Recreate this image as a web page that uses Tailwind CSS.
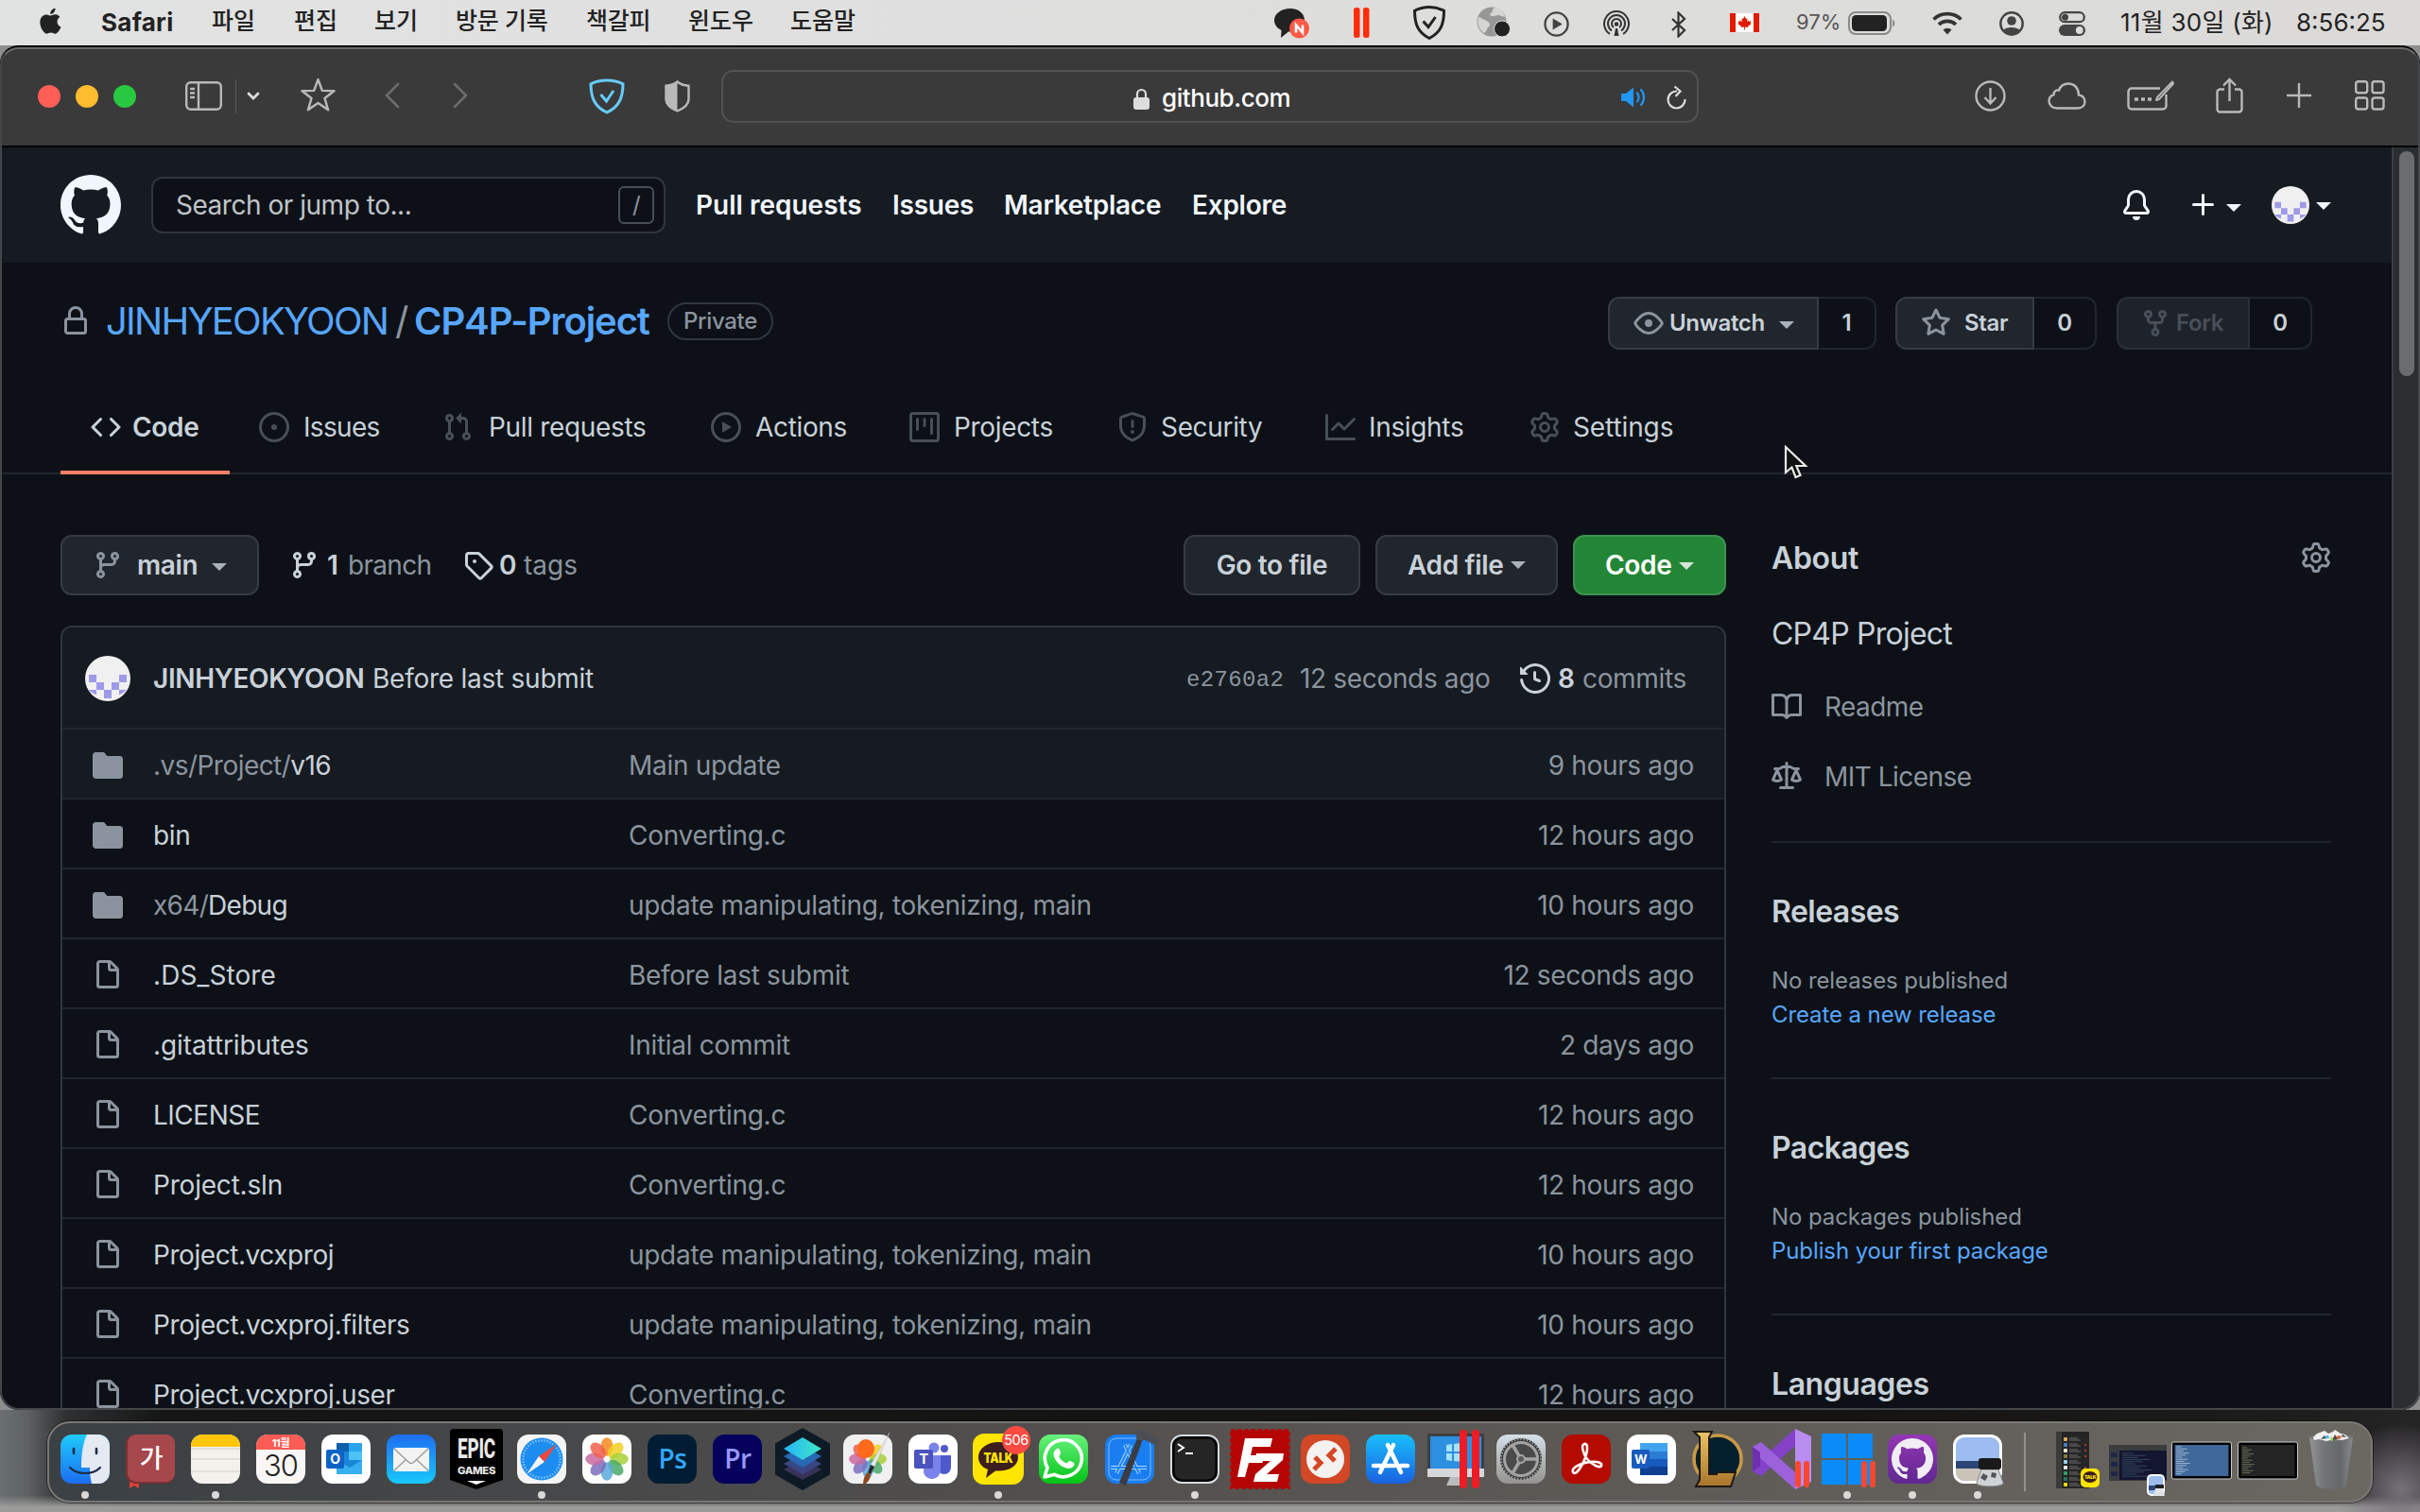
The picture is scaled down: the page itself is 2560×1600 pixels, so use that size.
<!DOCTYPE html>
<html lang="ko">
<head>
<meta charset="utf-8">
<title>JINHYEOKYOON/CP4P-Project</title>
<script src="https://cdn.jsdelivr.net/npm/@tailwindcss/browser@4"></script>
</head>
<body class="w-[2560px] h-[1600px] overflow-hidden bg-[#8d8d8d] font-['Inter','Noto_Sans_CJK_KR',sans-serif] tracking-[-0.336px] whitespace-nowrap">

<svg class="absolute size-0">
  <symbol id="i-mark" viewBox="0 0 16 16"><path fill-rule="evenodd" d="M8 0C3.58 0 0 3.58 0 8c0 3.54 2.29 6.53 5.47 7.59.4.07.55-.17.55-.38 0-.19-.01-.82-.01-1.49-2.01.37-2.53-.49-2.69-.94-.09-.23-.48-.94-.82-1.13-.28-.15-.68-.52-.01-.53.63-.01 1.08.58 1.23.82.72 1.21 1.87.87 2.33.66.07-.52.28-.87.51-1.07-1.78-.2-3.64-.89-3.64-3.95 0-.87.31-1.59.82-2.15-.08-.2-.36-1.02.08-2.12 0 0 .67-.21 2.2.82.64-.18 1.32-.27 2-.27.68 0 1.36.09 2 .27 1.53-1.04 2.2-.82 2.2-.82.44 1.1.16 1.92.08 2.12.51.56.82 1.27.82 2.15 0 3.07-1.87 3.75-3.65 3.95.29.25.54.73.54 1.48 0 1.07-.01 1.93-.01 2.2 0 .21.15.46.55.38A8.013 8.013 0 0016 8c0-4.42-3.58-8-8-8z"/></symbol>
  <symbol id="i-lock" viewBox="0 0 16 16"><path fill-rule="evenodd" d="M4 4v2h-.25A1.75 1.75 0 002 7.750v5.5c0 .966.784 1.750 1.750 1.750h8.500A1.750 1.750 0 0014 13.250v-5.500A1.750 1.750 0 0012.250 6H12V4a4 4 0 10-8 0zm6.500 2V4a2.500 2.500 0 00-5 0v2h5zM12 7.500h.250a.250.250 0 01.250.250v5.500a.250.250 0 01-.250.250h-8.500a.250.250 0 01-.250-.250v-5.500a.250.250 0 01.250-.250H12z"/></symbol>
  <symbol id="i-code" viewBox="0 0 16 16"><path fill-rule="evenodd" d="M4.72 3.22a.75.75 0 011.06 1.06L2.06 8l3.72 3.72a.75.75 0 11-1.06 1.06L.47 8.53a.75.75 0 010-1.06l4.250-4.250zm6.560 0a.75.75 0 10-1.060 1.060L13.940 8l-3.720 3.720a.75.75 0 101.060 1.060l4.250-4.250a.75.75 0 000-1.060l-4.250-4.250z"/></symbol>
  <symbol id="i-issue" viewBox="0 0 16 16"><path d="M8 9.500a1.500 1.500 0 100-3 1.500 1.500 0 000 3z"/><path fill-rule="evenodd" d="M8 0a8 8 0 100 16A8 8 0 008 0zM1.500 8a6.500 6.500 0 1113 0 6.500 6.500 0 01-13 0z"/></symbol>
  <symbol id="i-pr" viewBox="0 0 16 16"><path fill-rule="evenodd" d="M7.177 3.073L9.573.677A.25.25 0 0110 .854v4.792a.25.25 0 01-.427.177L7.177 3.427a.25.25 0 010-.354zM3.75 2.5a.75.75 0 100 1.5.75.75 0 000-1.5zm-2.250.75a2.250 2.250 0 113 2.122v5.256a2.251 2.251 0 11-1.500 0V5.372A2.250 2.250 0 011.500 3.250zM11 2.500h-1V4h1a1 1 0 011 1v5.628a2.251 2.251 0 101.500 0V5A2.500 2.500 0 0011 2.500zm1 10.250a.75.75 0 111.500 0 .75.75 0 01-1.500 0zM3.750 12a.75.75 0 100 1.500.75.75 0 000-1.500z"/></symbol>
  <symbol id="i-play" viewBox="0 0 16 16"><path fill-rule="evenodd" d="M1.500 8a6.500 6.500 0 1113 0 6.500 6.500 0 01-13 0zM8 0a8 8 0 100 16A8 8 0 008 0zM6.379 5.227A.25.25 0 006 5.442v5.117a.25.25 0 00.379.214l4.264-2.559a.25.25 0 000-.428L6.379 5.227z"/></symbol>
  <symbol id="i-project" viewBox="0 0 16 16"><path fill-rule="evenodd" d="M1.75 0A1.75 1.75 0 000 1.75v12.5C0 15.216.784 16 1.75 16h12.5A1.75 1.75 0 0016 14.25V1.75A1.75 1.75 0 0014.25 0H1.75zM1.5 1.75a.25.25 0 01.25-.25h12.5a.25.25 0 01.25.25v12.5a.25.25 0 01-.25.25H1.75a.25.25 0 01-.25-.25V1.75zM11.75 3a.75.75 0 00-.75.75v7.5a.75.75 0 001.5 0v-7.5a.75.75 0 00-.75-.75zm-8.25.75a.75.75 0 011.5 0v5.5a.75.75 0 01-1.5 0v-5.5zM8 3a.75.75 0 00-.75.75v3.5a.75.75 0 001.5 0v-3.5A.75.75 0 008 3z"/></symbol>
  <symbol id="i-shield" viewBox="0 0 16 16"><path fill-rule="evenodd" d="M7.467.133a1.75 1.75 0 011.066 0l5.25 1.68A1.75 1.75 0 0115 3.48V7c0 1.566-.32 3.182-1.303 4.682-.983 1.498-2.585 2.813-5.032 3.855a1.7 1.7 0 01-1.33 0c-2.447-1.042-4.049-2.357-5.032-3.855C1.32 10.182 1 8.566 1 7V3.48a1.75 1.75 0 011.217-1.667l5.25-1.68zm.61 1.429a.25.25 0 00-.153 0l-5.25 1.68a.25.25 0 00-.174.238V7c0 1.358.275 2.666 1.057 3.86.784 1.194 2.121 2.34 4.366 3.297a.2.2 0 00.154 0c2.245-.956 3.582-2.104 4.366-3.298C13.225 9.666 13.5 8.36 13.5 7V3.48a.25.25 0 00-.174-.237l-5.25-1.68zM9 10.5a1 1 0 11-2 0 1 1 0 012 0zm-.25-5.75a.75.75 0 10-1.5 0v3a.75.75 0 001.5 0v-3z"/></symbol>
  <symbol id="i-graph" viewBox="0 0 16 16"><path fill-rule="evenodd" d="M1.500 1.750a.75.75 0 00-1.500 0v12.500c0 .414.336.75.75.75h14.500a.75.75 0 000-1.500H1.500V1.750zm14.280 2.530a.75.75 0 00-1.060-1.060L10 7.940 7.530 5.470a.75.75 0 00-1.060 0L3.220 8.720a.75.75 0 001.060 1.060L7 7.060l2.470 2.470a.75.75 0 001.060 0l5.250-5.250z"/></symbol>
  <symbol id="i-gear" viewBox="0 0 16 16"><path fill-rule="evenodd" d="M7.429 1.525a6.593 6.593 0 011.142 0c.036.003.108.036.137.146l.289 1.105c.147.56.55.967.997 1.189.174.086.341.183.501.29.417.278.97.423 1.53.27l1.102-.303c.11-.03.175.016.195.046.219.31.41.641.573.989.014.031.022.11-.059.19l-.815.806c-.411.406-.562.957-.53 1.456a4.588 4.588 0 010 .582c-.032.499.119 1.05.53 1.456l.815.806c.08.08.073.159.059.19a6.494 6.494 0 01-.573.99c-.02.029-.086.074-.195.045l-1.103-.303c-.559-.153-1.112-.008-1.529.27-.16.107-.327.204-.5.29-.449.222-.851.628-.998 1.189l-.289 1.105c-.029.11-.101.143-.137.146a6.613 6.613 0 01-1.142 0c-.036-.003-.108-.037-.137-.146l-.289-1.105c-.147-.56-.55-.967-.997-1.189a4.502 4.502 0 01-.501-.29c-.417-.278-.97-.423-1.53-.27l-1.102.303c-.11.03-.175-.016-.195-.046a6.492 6.492 0 01-.573-.989c-.014-.031-.022-.11.059-.19l.815-.806c.411-.406.562-.957.53-1.456a4.587 4.587 0 010-.582c.032-.499-.119-1.05-.53-1.456l-.815-.806c-.08-.08-.073-.159-.059-.19a6.44 6.44 0 01.573-.99c.02-.029.086-.075.195-.045l1.103.303c.559.153 1.112.008 1.529-.27.16-.107.327-.204.5-.29.449-.222.851-.628.998-1.189l.289-1.105c.029-.11.101-.143.137-.146zM8 0c-.236 0-.47.01-.701.03-.743.065-1.29.615-1.458 1.261l-.29 1.106c-.017.066-.078.158-.211.224a5.994 5.994 0 00-.668.386c-.123.082-.233.09-.3.071L3.27 2.776c-.644-.177-1.392.02-1.82.63a7.977 7.977 0 00-.704 1.217c-.315.675-.111 1.422.363 1.891l.815.806c.05.048.098.147.088.294a6.084 6.084 0 000 .772c.01.147-.038.246-.088.294l-.815.806c-.474.469-.678 1.216-.363 1.891.2.428.436.835.704 1.218.428.609 1.176.806 1.82.63l1.103-.303c.066-.019.176-.011.299.071.213.143.436.272.668.386.133.066.194.158.212.224l.289 1.106c.169.646.715 1.196 1.458 1.26a8.094 8.094 0 001.402 0c.743-.064 1.29-.614 1.458-1.26l.29-1.106c.017-.066.078-.158.211-.224a5.98 5.98 0 00.668-.386c.123-.082.233-.09.3-.071l1.102.302c.644.177 1.392-.02 1.82-.63.268-.382.505-.789.704-1.217.315-.675.111-1.422-.364-1.891l-.814-.806c-.05-.048-.098-.147-.088-.294a6.1 6.1 0 000-.772c-.01-.147.039-.246.088-.294l.814-.806c.475-.469.679-1.216.364-1.891a7.992 7.992 0 00-.704-1.218c-.428-.609-1.176-.806-1.82-.63l-1.103.303c-.066.019-.176.011-.299-.071a5.991 5.991 0 00-.668-.386c-.133-.066-.194-.158-.212-.224L10.16 1.29C9.99.645 9.444.095 8.701.031A8.094 8.094 0 008 0zm1.5 8a1.5 1.5 0 11-3 0 1.5 1.5 0 013 0zM11 8a3 3 0 11-6 0 3 3 0 016 0z"/></symbol>
  <symbol id="i-branch" viewBox="0 0 16 16"><path fill-rule="evenodd" d="M11.75 2.5a.75.75 0 100 1.5.75.75 0 000-1.5zm-2.25.75a2.25 2.25 0 113 2.122V6A2.5 2.5 0 0110 8.5H6a1 1 0 00-1 1v1.128a2.251 2.251 0 11-1.5 0V5.372a2.25 2.25 0 111.5 0v1.836A2.492 2.492 0 016 7h4a1 1 0 001-1v-.628A2.25 2.25 0 019.5 3.25zM4.25 12a.75.75 0 100 1.5.75.75 0 000-1.5zM3.5 3.25a.75.75 0 111.5 0 .75.75 0 01-1.5 0z"/></symbol>
  <symbol id="i-tag" viewBox="0 0 16 16"><path fill-rule="evenodd" d="M2.5 7.775V2.75a.25.25 0 01.25-.25h5.025a.25.25 0 01.177.073l6.25 6.25a.25.25 0 010 .354l-5.025 5.025a.25.25 0 01-.354 0l-6.25-6.25a.25.25 0 01-.073-.177zm-1.5 0V2.75C1 1.784 1.784 1 2.75 1h5.025c.464 0 .91.184 1.238.513l6.25 6.25a1.75 1.75 0 010 2.474l-5.026 5.026a1.75 1.75 0 01-2.474 0l-6.25-6.25A1.75 1.75 0 011 7.775zM6 5a1 1 0 100 2 1 1 0 000-2z"/></symbol>
  <symbol id="i-eye" viewBox="0 0 16 16"><path fill-rule="evenodd" d="M1.679 7.932c.412-.621 1.242-1.75 2.366-2.717C5.175 4.242 6.527 3.5 8 3.5c1.473 0 2.824.742 3.955 1.715 1.124.967 1.954 2.096 2.366 2.717a.119.119 0 010 .136c-.412.621-1.242 1.75-2.366 2.717C10.825 11.758 9.473 12.5 8 12.5c-1.473 0-2.824-.742-3.955-1.715C2.92 9.818 2.09 8.69 1.679 8.068a.119.119 0 010-.136zM8 2c-1.981 0-3.67.992-4.933 2.078C1.797 5.169.88 6.423.43 7.1a1.619 1.619 0 000 1.798c.45.678 1.367 1.932 2.637 3.024C4.329 13.008 6.019 14 8 14c1.981 0 3.67-.992 4.933-2.078 1.27-1.091 2.187-2.345 2.637-3.023a1.619 1.619 0 000-1.798c-.45-.678-1.367-1.932-2.637-3.023C11.671 2.992 9.981 2 8 2zm0 8a2 2 0 100-4 2 2 0 000 4z"/></symbol>
  <symbol id="i-star" viewBox="0 0 16 16"><path fill-rule="evenodd" d="M8 .25a.75.75 0 01.673.418l1.882 3.815 4.21.612a.75.75 0 01.416 1.279l-3.046 2.97.719 4.192a.75.75 0 01-1.088.791L8 12.347l-3.766 1.98a.75.75 0 01-1.088-.79l.72-4.194L.818 6.374a.75.75 0 01.416-1.28l4.21-.611L7.327.668A.75.75 0 018 .25zm0 2.445L6.615 5.5a.75.75 0 01-.564.41l-3.097.45 2.24 2.184a.75.75 0 01.216.664l-.528 3.084 2.769-1.456a.75.75 0 01.698 0l2.77 1.456-.53-3.084a.75.75 0 01.216-.664l2.24-2.183-3.096-.45a.75.75 0 01-.564-.41L8 2.694v.001z"/></symbol>
  <symbol id="i-fork" viewBox="0 0 16 16"><path fill-rule="evenodd" d="M5 3.25a.75.75 0 11-1.5 0 .75.75 0 011.5 0zm0 2.122a2.25 2.25 0 10-1.5 0v.878A2.25 2.25 0 005.75 8.5h1.5v2.128a2.251 2.251 0 101.5 0V8.5h1.5a2.25 2.25 0 002.25-2.25v-.878a2.25 2.25 0 10-1.5 0v.878a.75.75 0 01-.75.75h-4.5A.75.75 0 015 6.25v-.878zm3.75 7.378a.75.75 0 11-1.5 0 .75.75 0 011.5 0zm3-8.75a.75.75 0 100-1.5.75.75 0 000 1.5z"/></symbol>
  <symbol id="i-bell" viewBox="0 0 16 16"><path d="M8 16a2 2 0 001.985-1.75c.017-.137-.097-.25-.235-.25h-3.5c-.138 0-.252.113-.235.25A2 2 0 008 16z"/><path fill-rule="evenodd" d="M8 1.5A3.5 3.5 0 004.5 5v2.947c0 .346-.102.683-.294.97l-1.703 2.556a.018.018 0 00-.003.01l.001.006c0 .002.002.004.004.006a.017.017 0 00.006.004l.007.001h10.964l.007-.001a.016.016 0 00.006-.004.016.016 0 00.004-.006l.001-.007a.017.017 0 00-.003-.01l-1.703-2.554a1.75 1.75 0 01-.294-.97V5A3.5 3.5 0 008 1.5zM3 5a5 5 0 0110 0v2.947c0 .05.015.098.042.139l1.703 2.555A1.518 1.518 0 0113.482 13H2.518a1.518 1.518 0 01-1.263-2.36l1.703-2.554A.25.25 0 003 7.947V5z"/></symbol>
  <symbol id="i-plus" viewBox="0 0 16 16"><path fill-rule="evenodd" d="M7.75 2a.75.75 0 01.75.75V7h4.25a.75.75 0 110 1.5H8.5v4.25a.75.75 0 11-1.5 0V8.5H2.75a.75.75 0 010-1.5H7V2.75A.75.75 0 017.75 2z"/></symbol>
  <symbol id="i-folder" viewBox="0 0 16 16"><path d="M1.75 1A1.75 1.75 0 000 2.75v10.5C0 14.216.784 15 1.75 15h12.5A1.75 1.75 0 0016 13.25v-8.5A1.75 1.75 0 0014.25 3h-6.5a.25.25 0 01-.2-.1l-.9-1.2c-.33-.44-.85-.7-1.4-.7h-3.5z"/></symbol>
  <symbol id="i-file" viewBox="0 0 16 16"><path fill-rule="evenodd" d="M3.75 1.5a.25.25 0 00-.25.25v11.5c0 .138.112.25.25.25h8.5a.25.25 0 00.25-.25V6H9.75A1.75 1.75 0 018 4.25V1.5H3.75zm5.75.56v2.19c0 .138.112.25.25.25h2.19L9.5 2.06zM2 1.75C2 .784 2.784 0 3.75 0h5.086c.464 0 .909.184 1.237.513l3.414 3.414c.329.328.513.773.513 1.237v8.086A1.75 1.75 0 0112.25 15h-8.5A1.75 1.75 0 012 13.25V1.75z"/></symbol>
  <symbol id="i-history" viewBox="0 0 16 16"><path fill-rule="evenodd" d="M1.643 3.143L.427 1.927A.25.25 0 000 2.104V5.75c0 .138.112.25.25.25h3.646a.25.25 0 00.177-.427L2.715 4.215a6.5 6.5 0 11-1.18 4.458.75.75 0 10-1.493.154 8.001 8.001 0 101.6-5.684zM7.75 4a.75.75 0 01.75.75v2.992l2.028.812a.75.75 0 01-.557 1.392l-2.5-1A.75.75 0 017 8.25v-3.5A.75.75 0 017.75 4z"/></symbol>
  <symbol id="i-book" viewBox="0 0 16 16"><path fill-rule="evenodd" d="M0 1.75A.75.75 0 01.75 1h4.253c1.227 0 2.317.59 3 1.501A3.744 3.744 0 0111.006 1h4.245a.75.75 0 01.75.75v10.5a.75.75 0 01-.75.75h-4.507a2.25 2.25 0 00-1.591.659l-.622.621a.75.75 0 01-1.06 0l-.622-.621A2.25 2.25 0 005.258 13H.75a.75.75 0 01-.75-.75V1.75zm8.755 3a2.25 2.25 0 012.25-2.25H14.5v9h-3.757c-.71 0-1.4.201-1.992.572l.004-7.322zm-1.504 7.324l.004-5.073-.002-2.253A2.25 2.25 0 005.003 2.5H1.5v9h3.757a3.75 3.75 0 011.994.574z"/></symbol>
  <symbol id="i-law" viewBox="0 0 16 16"><path fill-rule="evenodd" d="M8.75.75a.75.75 0 00-1.5 0V2h-.984c-.305 0-.604.08-.869.23l-1.288.737A.25.25 0 013.984 3H1.75a.75.75 0 000 1.5h.428L.066 9.192a.75.75 0 00.154.838l.53-.53-.53.53v.001l.002.002.002.002.006.006.016.015.045.04a3.514 3.514 0 00.686.45A4.492 4.492 0 003 11c.88 0 1.556-.22 2.023-.454a3.515 3.515 0 00.686-.45l.045-.04.016-.015.006-.006.002-.002.001-.002L5.25 9.5l.53.53a.75.75 0 00.154-.838L3.822 4.5h.162c.305 0 .604-.08.869-.23l1.289-.737a.25.25 0 01.124-.033h.984V13h-2.5a.75.75 0 000 1.5h6.5a.75.75 0 000-1.5h-2.5V3.5h.984a.25.25 0 01.124.033l1.29.736c.264.152.563.231.868.231h.162l-2.112 4.692a.75.75 0 00.154.838l.53-.53-.53.53v.001l.002.002.002.002.006.006.016.015.045.04a3.517 3.517 0 00.686.45A4.492 4.492 0 0013 11c.88 0 1.556-.22 2.023-.454a3.512 3.512 0 00.686-.45l.045-.04.01-.01.006-.005.006-.006.002-.002.001-.002-.529-.531.53.53a.75.75 0 00.154-.838L13.823 4.5h.427a.75.75 0 000-1.5h-2.234a.25.25 0 01-.124-.033l-1.29-.736A1.75 1.75 0 009.735 2H8.75V.75zM1.695 9.227c.285.135.718.273 1.305.273s1.02-.138 1.305-.273L3 6.327l-1.305 2.9zm10 0c.285.135.718.273 1.305.273s1.02-.138 1.305-.273L13 6.327l-1.305 2.9z"/></symbol>
  <symbol id="i-caret" viewBox="0 0 16 8"><path d="M0 0h16L8 8z"/></symbol>
  <symbol id="i-avatar" viewBox="0 0 48 48"><circle cx="24" cy="24" r="24" fill="#f0f0f0"/><path fill="#9e9ae8" d="M4 20h8v8H4zM36 20h8v8h-8zM12 28h8v8h-8zM28 28h8v8h-8zM20 36h8v9h-8zM4 36h8v5.500a24 24 0 0 1-8-5zM36 36h8a24 24 0 0 1-8 5.500z"/></symbol>
  <linearGradient id="gFinder" x1="0" y1="0" x2="0" y2="1"><stop offset="0" stop-color="#1fcbfb"/><stop offset="1" stop-color="#1b6df2"/></linearGradient>
  <linearGradient id="gMail" x1="0" y1="0" x2="0" y2="1"><stop offset="0" stop-color="#1e6ef0"/><stop offset="1" stop-color="#1ac8fb"/></linearGradient>
  <linearGradient id="gStore" x1="0" y1="0" x2="0" y2="1"><stop offset="0" stop-color="#18bffb"/><stop offset="1" stop-color="#1a62e0"/></linearGradient>
  <linearGradient id="gWa" x1="0" y1="0" x2="0" y2="1"><stop offset="0" stop-color="#68f27d"/><stop offset="1" stop-color="#03c316"/></linearGradient>
  <linearGradient id="gGray" x1="0" y1="0" x2="0" y2="1"><stop offset="0" stop-color="#d5e0e8"/><stop offset="1" stop-color="#94928f"/></linearGradient>
  <linearGradient id="gGold" x1="0" y1="0" x2="0" y2="1"><stop offset="0" stop-color="#ecc466"/><stop offset="1" stop-color="#a8742a"/></linearGradient>
  <linearGradient id="gLayer" x1="0" y1="0" x2="1" y2="0"><stop offset="0" stop-color="#25b4f8"/><stop offset="1" stop-color="#3ee8c4"/></linearGradient>
  <linearGradient id="gTrash" x1="0" y1="0" x2="1" y2="0"><stop offset="0" stop-color="#93989a"/><stop offset=".3" stop-color="#75797b"/><stop offset=".7" stop-color="#63676a"/><stop offset="1" stop-color="#888d8f"/></linearGradient>
  <linearGradient id="gGh" x1="0" y1="0" x2="0" y2="1"><stop offset="0" stop-color="#9536b4"/><stop offset="1" stop-color="#5f2890"/></linearGradient>
</svg>

<div class="flex h-full flex-col">

<!-- macOS menu bar -->
<div class="flex h-12 shrink-0 items-center bg-linear-to-r from-[#e1e2e2] via-[#dedfdd] to-[#dbdad8] text-[25px] text-[#222]">
  <div class="flex w-[1348px] pb-1 items-center tracking-normal font-medium">
    <div class="w-[107px] pl-[39px]"><svg class="h-8 w-[26px]" viewBox="0 0 24 30" fill="#222"><path d="M20 16c0-3.200 2.600-4.700 2.700-4.800-1.500-2.200-3.800-2.500-4.600-2.500-1.900-.2-3.800 1.200-4.800 1.200s-2.500-1.100-4.100-1.100c-2.100 0-4.100 1.200-5.200 3.100-2.200 3.900-.6 9.600 1.600 12.700 1.100 1.500 2.400 3.300 4 3.200 1.600-.1 2.200-1 4.200-1 1.900 0 2.500 1 4.200 1 1.700 0 2.800-1.600 3.900-3.100 1.200-1.800 1.700-3.500 1.700-3.600-.1 0-3.600-1.400-3.600-5.100zM16.800 6.600c.9-1.100 1.500-2.500 1.300-4-1.200.1-2.800.8-3.600 1.900-.8.9-1.500 2.400-1.300 3.900 1.400.1 2.700-.7 3.600-1.800z"/></svg></div>
    <div class="w-[117px] pt-0.5 text-[26px] font-bold tracking-[0.01em]">Safari</div>
    <div class="w-[87px] pt-0.5">파일</div><div class="w-[85px] pt-0.5">편집</div><div class="w-[86px] pt-0.5">보기</div><div class="w-[138px] pt-0.5 tracking-[-0.01em]">방문 기록</div><div class="w-[108px] pt-0.5 tracking-[-0.01em]">책갈피</div><div class="w-[108px] pt-0.5">윈도우</div><div class="pt-0.5">도움말</div>
  </div>
  <div class="w-[84px]"><svg width="38" height="34" viewBox="0 0 38 34"><path d="M17 2C7.500 2 0 7.500 0 14.500c0 4.500 3 8.300 7.500 10.500L7 33l8-6.500c10 .5 17-5 17-12S26 2 17 2z" fill="#222"/><circle cx="26.500" cy="23" r="10.500" fill="#ff5a45"/><path d="M23 27.500v-8l7 8v-8" fill="none" stroke="#fff" stroke-width="2.600"/></svg></div>
  <div class="w-[62px]"><svg width="18" height="34" viewBox="0 0 18 34" fill="#ff2d0a"><rect x="0" y="1" width="6.500" height="32" rx="2.500"/><rect x="10" y="1" width="6.500" height="32" rx="2.500"/></svg></div>
  <div class="w-[68px]"><svg width="36" height="38" viewBox="0 0 36 38" fill="none" stroke="#222" stroke-width="3"><path d="M18 2.500c-6 0-11 1.500-15.500 3.800C2.500 20 5.500 29 18 35.500 30.500 29 33.500 20 33.500 6.300 29 4 24 2.500 18 2.500z"/><path d="M11.500 17.500l5.500 6L24.500 13"/></svg></div>
  <div class="w-[71px]"><svg width="36" height="34" viewBox="0 0 36 34"><circle cx="16" cy="16" r="15.500" fill="#979797"/><path d="M19 1c-3 2-1 4-4 6-2 1 0 4 3 3 3 0 5-2 8 0l4 1c-1-5-5-9-11-10zM2 11c3 0 4 3 7 3 2 2 5 2 5 5 0 2-3 3-3 6l-3 3c-5-3-8-10-6-17z" fill="#d5d5d4"/><circle cx="27" cy="23.500" r="8.500" fill="#222" stroke="#dedede"/></svg></div>
  <div class="w-[63px] pt-0.5"><svg width="27" height="27" viewBox="0 0 28 28"><circle cx="14" cy="14" r="12.500" fill="none" stroke="#444" stroke-width="2.400"/><path d="M10 7.800v12.400L20.500 14z" fill="#444"/></svg></div>
  <div class="w-[71px] pt-0.5"><svg width="28" height="28" viewBox="0 0 28 28" fill="none" stroke="#333" stroke-width="2"><path d="M7 25a13 13 0 1 1 14 0"/><path d="M9 21.500a9 9 0 1 1 10 0"/><path d="M11 18a5 5 0 1 1 6 0"/><circle cx="14" cy="14.500" r="1.300" fill="#333"/><path d="M13 19l-1.500 8h5L15 19z" fill="#333" stroke="none"/></svg></div>
  <div class="w-[63px] pt-1"><svg width="18" height="28" viewBox="0 0 18 28" fill="none" stroke="#333" stroke-width="2.200"><path d="M2 8l13 12-6.500 6.500v-25L15 8 2 20"/></svg></div>
  <div class="w-[70px]"><svg width="31" height="20" viewBox="0 0 31 20"><rect width="31" height="20" fill="#fff"/><path d="M0 0h6v20H0zM25 0h6v20h-6z" fill="#e11b00"/><path d="M15.500 3l1.600 3 1.500-.8-.6 4 2-1.700.5 1.200 2-.3-.8 2 .9.800-3.600 2.600.4 1.200-3.500-.5.100 3h-1l.1-3-3.500.5.400-1.200-3.600-2.600.9-.8-.8-2 2 .3.500-1.200 2 1.700-.6-4 1.500.8z" fill="#e11b00"/></svg></div>
  <div class="w-[55px] pb-0.5 text-[22px] tracking-normal text-[#555]">97%</div>
  <div class="w-[89px]"><svg width="50" height="25" viewBox="0 0 50 25"><rect x="1" y="1" width="44" height="23" rx="7" fill="none" stroke="#8a8a8a" stroke-width="2"/><rect x="4" y="4" width="37" height="17" rx="4.500" fill="#222"/><path d="M47 8.500c3 1 3 7 0 8z" fill="#8a8a8a"/></svg></div>
  <div class="w-[71px]"><svg width="32" height="25" viewBox="0 0 32 25" fill="none" stroke="#333" stroke-width="3.800"><path d="M1.500 8.500a21 21 0 0 1 29 0"/><path d="M7 14a13 13 0 0 1 18 0"/><path d="M16 24.500l-4.500-5a6.500 6.500 0 0 1 9 0z" fill="#333" stroke="none"/></svg></div>
  <div class="w-[63px] pt-0.5"><svg width="26" height="26" viewBox="0 0 26 26"><circle cx="13" cy="13" r="11.700" fill="none" stroke="#444" stroke-width="2.400"/><circle cx="13" cy="10" r="4.800" fill="#444"/><path d="M4.500 20c2-4 14.500-4 17 0-4 6-13 6-17 0z" fill="#444"/></svg></div>
  <div class="w-[65px] pt-0.5"><svg width="28" height="26" viewBox="0 0 28 26"><rect x="1.200" y="1.200" width="25.600" height="10" rx="5" fill="none" stroke="#444" stroke-width="2.200"/><circle cx="6.500" cy="6.200" r="3.500" fill="#444"/><rect x="0" y="14" width="28" height="12" rx="6" fill="#444"/><circle cx="21.800" cy="20" r="3.900" fill="#dcdbd9"/></svg></div>
  <div class="w-[186px] pb-0.5 text-[26px] tracking-[0.01em]">11월 30일 (화)</div>
  <div class="pb-px text-[26px] tracking-normal">8:56:25</div>
</div>

<!-- Safari window -->
<div class="relative flex h-[1444px] shrink-0 flex-col overflow-hidden rounded-[20px] bg-[#0d1117]">
  <div class="flex h-[108px] shrink-0 items-center border-b-2 border-black bg-[#3a3a3a] pt-0.5">
    <div class="flex w-[196px] items-center gap-4 pl-10"><i class="size-6 rounded-full bg-[#ff5f57]"></i><i class="size-6 rounded-full bg-[#febc2e]"></i><i class="size-6 rounded-full bg-[#28c840]"></i></div>
    <div class="w-[53px] pb-0.5"><svg width="39" height="31" viewBox="0 0 39 31" fill="none" stroke="#b9b9b9" stroke-width="2.400"><rect x="1.200" y="1.200" width="36.600" height="28.600" rx="4.500"/><path d="M14 1v29M5 8h5M5 12.500h5M5 17h5"/></svg></div>
    <div class="h-9 w-3 border-l border-[#575757]"></div>
    <div class="w-[57px]"><svg width="14" height="10" viewBox="0 0 14 10" fill="none" stroke="#ddd" stroke-width="2.800" stroke-linecap="round"><path d="M2 2l5 5 5-5"/></svg></div>
    <div class="w-[89px] pb-1"><svg width="37" height="36" viewBox="0 0 36 35" fill="none" stroke="#b9b9b9" stroke-width="2.400" stroke-linejoin="round"><path d="M18 2l4.200 11.500 12.300.3-9.700 7.500 3.500 12L18 26.200 7.700 33.300l3.500-12-9.700-7.500 12.300-.3z"/></svg></div>
    <div class="w-[72px] pb-0.5"><svg width="16" height="28" viewBox="0 0 16 28" fill="none" stroke="#6c6c6c" stroke-width="2.600" stroke-linecap="round"><path d="M14 2L2 14l12 12"/></svg></div>
    <div class="w-36 pb-0.5"><svg width="16" height="28" viewBox="0 0 16 28" fill="none" stroke="#6c6c6c" stroke-width="2.600" stroke-linecap="round"><path d="M2 2l12 12L2 26"/></svg></div>
    <div class="w-20"><svg width="38" height="38" viewBox="0 0 38 38" fill="none" stroke="#67ccff" stroke-width="3"><path d="M19 2c-6 0-12 1.200-17 3.800C2 20 6 30 19 36 32 30 36 20 36 5.800 31 3.200 25 2 19 2z"/><path d="M12.500 17l6 7L26 13" /></svg></div>
    <div class="w-[60px]"><svg width="27" height="34" viewBox="0 0 27 34"><path d="M13.500 1.500C10 4.500 6 5.500 1.500 5.800V20c0 6 6 10 12 12.500 6-2.500 12-6.500 12-12.500V5.800C21 5.500 17 4.500 13.500 1.500z" fill="none" stroke="#b9b9b9" stroke-width="2.400"/><path d="M13.500 1.500C10 4.500 6 5.500 1.500 5.800V20c0 6 6 10 12 12.500z" fill="#b9b9b9"/></svg></div>
    <div class="flex h-14 w-[1034px] items-center rounded-[13px] border-2 border-[#525252] text-[26px] font-medium tracking-[-0.017em] text-white">
      <div class="w-[464px] pl-[434px] pt-1"><svg width="17" height="23" viewBox="0 0 17 23"><path d="M4 11V6.500a4.500 4.500 0 0 1 9 0V11" fill="none" stroke="#ddd" stroke-width="2.200"/><rect x="0" y="10" width="17" height="13" rx="3" fill="#ddd"/></svg></div>
      <div class="w-[486px] pt-0.5">github.com</div>
      <div class="w-[47px] pt-0.5"><svg width="28" height="22" viewBox="0 0 28 22"><path d="M0 7h5l8-6.500v21L5 15H0z" fill="#2196f3"/><path d="M17 6.500c2 2.500 2 6.500 0 9M21 3c4 4.500 4 11.500 0 16" fill="none" stroke="#2196f3" stroke-width="2.200" stroke-linecap="round"/></svg></div>
      <svg class="mt-0.5" width="22" height="26" viewBox="0 0 22 26" fill="none" stroke="#ddd" stroke-width="2.200"><path d="M12 6.500a9 9 0 1 0 8.500 8.500M9.500 1.500l6 5-5 5.500"/></svg>
    </div>
    <div class="flex flex-1 items-center pb-0.5 pl-[292px]">
      <div class="w-[77px]"><svg width="33" height="33" viewBox="0 0 33 33" fill="none" stroke="#b9b9b9" stroke-width="2.400"><circle cx="16.500" cy="16.500" r="15"/><path d="M16.500 8v16M10.500 18l6 6.500 6-6.500"/></svg></div>
      <div class="w-[84px]"><svg width="41" height="29" viewBox="0 0 41 29" fill="none" stroke="#b9b9b9" stroke-width="2.400"><path d="M10 27.500h22c4.500 0 7.500-3 7.500-7 0-4-3-6.800-6.500-7C33 6.500 28.500 1.500 22 1.500c-5 0-8.500 3-10 7-3-.6-5.500 1.500-5.500 4.800-3 .8-5 3.200-5 6.700 0 4.200 3.500 7.500 8.500 7.500z"/></svg></div>
      <div class="w-[94px]"><svg width="50" height="32" viewBox="0 0 50 32" fill="none" stroke="#b9b9b9" stroke-width="2.400"><path d="M35 8.500H5a3.500 3.500 0 0 0-3.500 3.500v15A3.500 3.500 0 0 0 5 30.500h33a3.500 3.500 0 0 0 3.500-3.500V15"/><path d="M48 1.500L32 18l-1 3 3-1L49 3.500z" stroke-linejoin="round" stroke-width="2"/><path d="M8 20h4M15 20h4M22 20h4" stroke-width="3.500"/></svg></div>
      <div class="w-[74px]"><svg width="29" height="38" viewBox="0 0 29 38" fill="none" stroke="#b9b9b9" stroke-width="2.400"><path d="M9 12.500H4.500A3 3 0 0 0 1.500 15.500v18a3 3 0 0 0 3 3h20a3 3 0 0 0 3-3v-18a3 3 0 0 0-3-3H20M14.500 25V3M8 8.500l6.500-6.500L21 8.500"/></svg></div>
      <div class="w-[73px]"><svg width="28" height="28" viewBox="0 0 28 28" stroke="#b9b9b9" stroke-width="2.400"><path d="M14 1v26M1 14h26"/></svg></div>
      <svg width="32" height="32" viewBox="0 0 32 32" fill="none" stroke="#b9b9b9" stroke-width="2.400"><rect x="1.200" y="1.200" width="12" height="12" rx="2.500"/><rect x="18.500" y="1.200" width="12" height="12" rx="2.500"/><rect x="1.200" y="18.500" width="12" height="12" rx="2.500"/><rect x="18.500" y="18.500" width="12" height="12" rx="2.500"/></svg>
    </div>
  </div>

  <div class="flex min-h-0 flex-1">
    <div class="w-[2530px] text-[28px] text-[#c9d1d9]">

      <!-- GitHub header -->
      <div class="flex h-[122px] items-center bg-[#161b22] pl-16 font-semibold tracking-[-0.009em] text-[#f0f6fc]">
        <svg class="size-16 fill-[#f0f6fc]"><use href="#i-mark"/></svg>
        <div class="ml-8 flex h-15 w-[544px] items-center justify-between rounded-xl border-2 border-[#30363d] bg-[#0d1117] pl-6 pr-2.5 font-normal tracking-[-0.017em] text-[#c0c4c9]"><span>Search or jump to...</span>
          <span class="flex h-10 w-[38px] items-center justify-center rounded-md border-2 border-[#484f58] text-2xl text-[#8b949e]">/</span></div>
        <div class="ml-8 w-[208px] tracking-normal">Pull requests</div><div class="w-[118px]">Issues</div><div class="w-[199px]">Marketplace</div><div class="w-[983px]">Explore</div>
        <div class="w-[71px]"><svg class="size-8 fill-[#f0f6fc]"><use href="#i-bell"/></svg></div>
        <div class="w-10"><svg class="size-8 fill-[#f0f6fc]"><use href="#i-plus"/></svg></div>
        <svg class="mt-1.5 h-2 w-4 fill-[#f0f6fc]"><use href="#i-caret"/></svg>
        <svg class="ml-8 size-10"><use href="#i-avatar"/></svg>
        <svg class="ml-[7px] mt-0.5 h-2 w-4 fill-[#f0f6fc]"><use href="#i-caret"/></svg>
      </div>

      <!-- Repository title -->
      <div class="mt-9 flex h-14 items-center pl-16 text-2xl">
        <svg class="mb-1 size-8 fill-[#8b949e]"><use href="#i-lock"/></svg>
        <div class="mb-1 ml-4 flex h-12 w-[594px] items-center text-[40px] text-[#58a6ff]"><span class="w-[306px] tracking-[-0.044em]">JINHYEOKYOON</span><span class="w-5 text-[#8b949e]">/</span><span class="font-semibold tracking-[-0.027em]">CP4P-Project</span></div>
        <div class="mb-1 flex h-10 w-28 items-center justify-center rounded-full border-2 border-[#30363d] font-medium text-[#8b949e]">Private</div>
        <div class="ml-[883px] flex h-14 items-center font-semibold">
          <div class="flex h-full w-[223px] items-center rounded-l-xl border-2 border-[#363b42] bg-[#21262d]"><svg class="ml-[25px] size-8 fill-[#8b949e]"><use href="#i-eye"/></svg><span class="ml-1.5 w-[116px]">Unwatch</span><svg class="mt-1 h-2 w-4 fill-[#a9b1ba]"><use href="#i-caret"/></svg></div>
          <div class="flex h-full w-[61px] items-center justify-center rounded-r-xl border-2 border-l-0 border-[#21262d]">1</div>
          <div class="ml-5 flex h-full w-[147px] items-center rounded-l-xl border-2 border-[#363b42] bg-[#21262d]"><svg class="ml-[25px] size-8 fill-[#8b949e]"><use href="#i-star"/></svg><span class="ml-3.5">Star</span></div>
          <div class="flex h-full w-[66px] items-center justify-center rounded-r-xl border-2 border-l-0 border-[#21262d]">0</div>
          <div class="ml-[21px] flex h-full w-[141px] items-center rounded-l-xl border-2 border-[#2b3037] bg-[#1e2229] text-[#484f58]"><svg class="ml-[23px] size-8 fill-[#484f58]"><use href="#i-fork"/></svg><span class="ml-1.5">Fork</span></div>
          <div class="flex h-full w-[66px] items-center justify-center rounded-r-xl border-2 border-l-0 border-[#21262d]">0</div>
        </div>
      </div>

      <!-- Repository tabs -->
      <div class="mt-[34px] flex h-[98px] border-b-2 border-[#21262d] pl-16">
        <div class="-mb-0.5 flex w-[179px] items-center border-b-4 border-[#f78166] pl-8 pt-0.5 font-semibold"><svg class="mr-3 size-8 fill-[#c9d1d9]"><use href="#i-code"/></svg>Code</div>
        <div class="flex w-[193px] items-center gap-[15px] pl-[31px] tracking-[-0.024em]"><svg class="size-8 fill-[#484f58]"><use href="#i-issue"/></svg>Issues</div>
        <div class="flex w-[284px] items-center gap-[17px] pl-8"><svg class="size-8 fill-[#484f58]"><use href="#i-pr"/></svg>Pull requests</div>
        <div class="flex w-[210px] items-center gap-[15px] pl-8"><svg class="size-8 fill-[#484f58]"><use href="#i-play"/></svg>Actions</div>
        <div class="flex w-[220px] items-center gap-[15px] pl-8"><svg class="size-8 fill-[#484f58]"><use href="#i-project"/></svg>Projects</div>
        <div class="flex w-[220px] items-center gap-3.5 pl-8"><svg class="size-8 fill-[#484f58]"><use href="#i-shield"/></svg>Security</div>
        <div class="flex w-[216px] items-center gap-3.5 pl-8"><svg class="size-8 fill-[#484f58]"><use href="#i-graph"/></svg>Insights</div>
        <div class="flex items-center gap-3.5 pl-8 tracking-[-0.004em]"><svg class="size-8 fill-[#484f58]"><use href="#i-gear"/></svg>Settings</div>
      </div>

      <div class="flex gap-12 pl-16 pt-16">
        <div class="w-[1762px]">
          <!-- Branch controls -->
          <div class="flex h-16 items-center">
            <div class="flex h-full w-[210px] items-center rounded-xl border-2 border-[#363b42] bg-[#21262d] font-semibold"><svg class="ml-8 size-8 fill-[#8b949e]"><use href="#i-branch"/></svg><span class="ml-[15px] w-[79px]">main</span><svg class="mt-1 h-2 w-4 fill-[#a9b1ba]"><use href="#i-caret"/></svg></div>
            <svg class="ml-8 size-8 fill-[#c9d1d9]"><use href="#i-branch"/></svg><b class="ml-2 w-[22px] font-semibold">1</b><span class="w-[122px] tracking-[-0.025em] text-[#8b949e]">branch</span>
            <svg class="size-8 fill-[#c9d1d9]"><use href="#i-tag"/></svg><b class="ml-1.5 w-[26px] font-semibold">0</b><span class="w-[698px] tracking-normal text-[#8b949e]">tags</span>
            <div class="flex h-full w-[187px] items-center justify-center rounded-xl border-2 border-[#363b42] bg-[#21262d] font-semibold">Go to file</div>
            <div class="ml-4 flex h-full w-[193px] items-center rounded-xl border-2 border-[#363b42] bg-[#21262d] pl-8 font-semibold"><span class="w-[109px]">Add file</span><svg class="h-2 w-4 fill-[#a9b1ba]"><use href="#i-caret"/></svg></div>
            <div class="ml-4 flex h-full w-[162px] items-center rounded-xl border-2 border-[#3c9350] bg-[#238636] pl-8 font-semibold text-white"><span class="w-[78px]">Code</span><svg class="mt-0.5 h-2 w-4 fill-[#d3e7d7]"><use href="#i-caret"/></svg></div>
          </div>
          <!-- File list -->
          <div class="mt-8 rounded-t-xl border-2 border-b-0 border-[#30363d]">
            <div class="flex h-[106px] items-center rounded-t-xl bg-[#161b22] pl-6 pt-0.5">
              <svg class="size-12"><use href="#i-avatar"/></svg>
              <b class="ml-6 w-[232px] font-semibold">JINHYEOKYOON</b><span class="w-[861px] tracking-[-0.009em]">Before last submit</span>
              <span class="w-[120px] pt-1 font-['Liberation_Mono',monospace] text-2xl tracking-[0.014em] text-[#8b949e]">e2760a2</span><span class="w-[233px] text-[#8b949e]">12 seconds ago</span>
              <svg class="size-8 fill-[#c9d1d9]"><use href="#i-history"/></svg><b class="ml-2 w-[26px] font-semibold">8</b><span class="text-[#8b949e]">commits</span>
            </div>
            <div id="files"></div>
          </div>
        </div>

        <!-- Sidebar -->
        <div class="w-[592px] text-[#8b949e]">
          <div class="flex h-12 items-center justify-between text-[32px] font-semibold text-[#c9d1d9]"><span class="pt-0.5">About</span><svg class="size-8 fill-[#8b949e]"><use href="#i-gear"/></svg></div>
          <div class="mt-8 flex h-12 items-center pt-0.5 text-[32px] tracking-[-0.024em] text-[#c9d1d9]">CP4P Project</div>
          <div class="mt-[34px] flex h-10 items-center gap-6 tracking-[-0.02em]"><svg class="size-8 fill-[#8b949e]"><use href="#i-book"/></svg>Readme</div>
          <div class="mt-[34px] flex h-10 items-center gap-6 tracking-[-0.019em]"><svg class="size-8 fill-[#8b949e]"><use href="#i-law"/></svg>MIT License</div>
          <div class="mt-12 h-[250px] border-t-2 border-[#21262d] pt-[49px] text-2xl/9 tracking-[-0.1px]"><div class="flex h-12 items-center text-[32px] font-semibold tracking-[-0.017em] text-[#c9d1d9]">Releases</div><div class="mt-[31px]">No releases published</div><div class="text-[#58a6ff]">Create a new release</div></div>
          <div class="h-[250px] border-t-2 border-[#21262d] pt-[49px] text-2xl/9 tracking-[-0.1px]"><div class="flex h-12 items-center text-[32px] font-semibold tracking-[-0.017em] text-[#c9d1d9]">Packages</div><div class="mt-[31px]">No packages published</div><div class="text-[#58a6ff]">Publish your first package</div></div>
          <div class="border-t-2 border-[#21262d] pt-[49px]"><div class="flex h-12 items-center text-[32px] font-semibold tracking-[-0.014em] text-[#c9d1d9]">Languages</div></div>
        </div>
      </div>
    </div>
    <div class="flex-1 border-l-2 border-[#3c3f42] bg-[#2b2e31] pl-1.5 pt-1"><div class="h-[238px] w-4 rounded-full bg-[#6a6c6e]"></div></div>
  </div>
  <div class="pointer-events-none absolute inset-0 mt-px rounded-[20px] border-2 border-t-[3px] border-[#44474a] border-t-[#6a6a6a]"></div>
  <div class="pointer-events-none absolute inset-0 rounded-[20px] border-t-2 border-black"></div>
  <svg class="absolute left-[1887px] top-[423px]" width="26" height="38" viewBox="0 0 26 38"><path d="M2 2v27l6.500-5.500 4 10.500 5-2-4.200-10H23z" fill="#111" stroke="#e8e8e8" stroke-width="2.200"/></svg>
</div>

<!-- Dock, over the wallpaper -->
<div class="flex flex-1 flex-col bg-[linear-gradient(90deg,#6b7072_0px,#5d6163_30px,#2e3031_70px,#161616_170px,#141312_1900px,#1d1c1c_2400px,#262526_2560px)]">
  <div class="flex h-full flex-col items-center bg-[radial-gradient(ellipse_70px_70px_at_2540px_84px,#77717a,transparent),linear-gradient(180deg,transparent_84%,#9b9b99_95%)] pt-3">
    <div class="flex h-[86px] w-[2460px] items-start rounded-[24px] border-2 border-[#7a7875] bg-linear-to-r from-[#3b4044] via-[#53504e] via-45% to-[#6b6862] pl-[3px] shadow-[0_0_0_1px_rgba(0,0,0,0.45)]" id="dock"></div>
  </div>
</div>
</div>

<script>
  // directory prefix, name, commit message, age, is a folder, letter spacing of the name
  const files = [
    ['.vs/Project/', 'v16', 'Main update', '9 hours ago', 1, 'tracking-[-0.54px]'],
    ['', 'bin', 'Converting.c', '12 hours ago', 1, 'tracking-[-0.3px]'],
    ['x64/', 'Debug', 'update manipulating, tokenizing, main', '10 hours ago', 1, 'tracking-[-0.7px]'],
    ['', '.DS_Store', 'Before last submit', '12 seconds ago', 0, 'tracking-[0.1px]'],
    ['', '.gitattributes', 'Initial commit', '2 days ago', 0, 'tracking-[-0.1px]'],
    ['', 'LICENSE', 'Converting.c', '12 hours ago', 0, 'tracking-[-0.5px]'],
    ['', 'Project.sln', 'Converting.c', '12 hours ago', 0, 'tracking-[-0.2px]'],
    ['', 'Project.vcxproj', 'update manipulating, tokenizing, main', '10 hours ago', 0, 'tracking-[-0.44px]'],
    ['', 'Project.vcxproj.filters', 'update manipulating, tokenizing, main', '10 hours ago', 0, 'tracking-[-0.4px]'],
    ['', 'Project.vcxproj.user', 'Converting.c', '12 hours ago', 0, 'tracking-[-0.42px]'],
  ];
  document.getElementById('files').innerHTML = files.map((f, i) => `
    <div class="flex h-[74px] items-center border-t-2 border-[#21262d] pl-8 pr-8 ${i ? '' : 'bg-[#161b22]'}">
      <svg class="mt-[3px] size-8 fill-[#8b949e]"><use href="${f[4] ? '#i-folder' : '#i-file'}"/></svg>
      <span class="ml-8 mt-1 w-[503px] ${f[5]}"><span class="text-[#8b949e]">${f[0]}</span>${f[1]}</span>
      <span class="mt-1 flex-1 tracking-[-0.29px] text-[#8b949e]">${f[2]}</span>
      <span class="mt-1 text-[#8b949e]">${f[3]}</span>
    </div>`).join('');

  const tile = (fill, inner) => `<rect x="6" y="6" width="52" height="52" rx="12" fill="${fill}"/>${inner}`;
  const petals = (r, o) => ['#f58a1f','#f2d024','#a8cf3a','#4aa86b','#5aa9dd','#7d6ec0','#c96aa0','#f0604d'].map((c, i) => `<ellipse cx="32" cy="${32 - o}" rx="${r}" ry="${r * 1.5}" fill="${c}" fill-opacity=".85" transform="rotate(${i * 45} 32 32)"/>`).join('');
  const ticks = (n, r1, r2, c, w) => Array.from({length: n}, (_, i) => `<path d="M32 ${32 - r1}V${32 - r2}" stroke="${c}" stroke-width="${w}" transform="rotate(${i * 360 / n} 32 32)"/>`).join('');
  const apps = [
    [tile('url(#gFinder)', '<path d="M34 6h12a12 12 0 0 1 12 12v28a12 12 0 0 1-12 12h-7c-1.500-6-2-11-2-17h-9C28 26 30 14 34 6z" fill="#e4e9f2"/><path d="M20 21v5M44 21v5" stroke="#1d2b45" stroke-width="2.600" stroke-linecap="round"/><path d="M16 41c8 8 24 8 32 0" fill="none" stroke="#1d2b45" stroke-width="2.200" stroke-linecap="round"/>'), 1],
    ['<path d="M10 52h10v11l-5-3-5 3z" fill="#e0403c"/><rect x="6" y="6" width="52" height="52" rx="10" fill="#7e2f32"/><rect x="8" y="6" width="50" height="50" rx="9" fill="#a5474b"/><text x="33" y="41" font-size="27" font-weight="500" fill="#fff" text-anchor="middle" font-family="Noto Sans CJK KR">가</text>', 0],
    [tile('#f2f1ec', '<path d="M6 19v-1A12 12 0 0 1 18 6h28a12 12 0 0 1 12 12v1z" fill="#fdc60b"/><path d="M6 21h52M6 32h52M6 45h52" stroke="#cfcecb" stroke-width="1"/>'), 1],
    [tile('#f8f7f5', '<path d="M6 22v-4A12 12 0 0 1 18 6h28a12 12 0 0 1 12 12v4z" fill="#f95c55"/><text x="32" y="18.500" font-size="11" font-weight="700" fill="#fff" text-anchor="middle">11월</text><text x="32" y="50" font-size="31" font-weight="300" fill="#222" text-anchor="middle" letter-spacing="-1">30</text>'), 0],
    [tile('#fff', '<path d="M22 15h27v33H22z" fill="#1a86d8"/><path d="M22 15h13v9H22z" fill="#0f5ea8"/><path d="M35 24h14v9H35z" fill="#4dc3f7"/><path d="M35 15h14v9H35z" fill="#2aa4ea"/><path d="M22 48V33l14 8 13-8v15z" fill="#35b0f0"/><rect x="11" y="22" width="19" height="20" rx="2" fill="#0f63c4"/><text x="20.500" y="37" font-size="14" font-weight="700" fill="#fff" text-anchor="middle">O</text>'), 0],
    [tile('url(#gMail)', '<rect x="13" y="20" width="38" height="25" rx="3" fill="#f3f3f3"/><path d="M14 21l15 14c2 2 4 2 6 0l15-14M14 44l12-11M50 44L38 33" fill="none" stroke="#9a9a9a" stroke-width="1.300"/>'), 0],
    ['<path d="M4 4a4 4 0 0 1 4-4h48a4 4 0 0 1 4 4v50L32 64 4 54z" fill="#000"/><text x="32" y="31" font-size="30" font-weight="800" fill="#e9e9e9" text-anchor="middle" textLength="40" lengthAdjust="spacingAndGlyphs" font-family="Roboto">EPIC</text><text x="32" y="47.500" font-size="10.500" font-weight="800" fill="#e9e9e9" text-anchor="middle" textLength="40" lengthAdjust="spacingAndGlyphs">GAMES</text><path d="M22 55h20l-10 4z" fill="#fff"/>', 0],
    [tile('#f4f4f4', '<circle cx="32" cy="32" r="22.500" fill="#1b8df0"/>' + ticks(40, 21, 18.5, '#cfe8ff', .8) + '<path d="M48 16L35 35l-6-6z" fill="#f0483e"/><path d="M16 48l19-13-6-6z" fill="#f4f4f4"/>'), 1],
    [tile('#fdfdfd', petals(6.5, 13)), 0],
    [tile('#021d33', '<text x="32.500" y="42" font-size="28" font-weight="600" fill="#31a8ff" text-anchor="middle" font-family="Open Sans">Ps</text>'), 0],
    [tile('#04005c', '<text x="32.500" y="42" font-size="28" font-weight="600" fill="#9999ff" text-anchor="middle" font-family="Open Sans">Pr</text>'), 0],
    ['<path d="M32 0l28 16v32L32 64 4 48V16z" fill="#0e1b26" stroke="#0e1b26" stroke-linejoin="round" stroke-width="2"/><path d="M32 32l20 11-20 11-20-11z" fill="#39335a"/><path d="M32 26l20 11-20 11-20-11z" fill="#3a4583"/><path d="M32 18l20 11-20 12-20-12z" fill="#2868b4"/><path d="M32 9l20 12-20 12-20-12z" fill="url(#gLayer)"/>', 0],
    [tile('#f1f0f0', petals(6, 11) + '<ellipse cx="30" cy="21" rx="9" ry="10" fill="#ff6a1a"/><path d="M55 4L39 40l-4-2z" fill="#e8e8e8" stroke="#bbb" stroke-width=".5"/><path d="M39 40l-4-2-3 8 3 2z" fill="#2a2a2a"/><path d="M32 46l3 2c0 5-3 9-8 12 0-5 1-11 5-14z" fill="#8a4a22"/>'), 0],
    [tile('#fff', '<circle cx="33" cy="20" r="5.500" fill="#7b83eb"/><circle cx="44" cy="21" r="4" fill="#5059c9"/><path d="M38 28h13v12c0 9-10 10-13 5z" fill="#5059c9"/><path d="M23 28h17v14c0 9-6 11-10 11s-8-4-8-8z" fill="#7b83eb"/><rect x="12" y="22" width="20" height="20" rx="2" fill="#4b53bc"/><text x="22" y="37" font-size="15" font-weight="700" fill="#fff" text-anchor="middle">T</text>'), 0],
    ['<rect x="5" y="5" width="54" height="54" rx="12" fill="#fee500"/><path d="M32 14c-12 0-21 7-21 16 0 6 4 11 10 13l-2 9 10-7.500c14 1 24-5 24-14.500 0-9-9-16-21-16z" fill="#3c1e1e"/><text x="32" y="36" font-size="14" font-weight="900" fill="#fee500" text-anchor="middle" textLength="31" lengthAdjust="spacingAndGlyphs">TALK</text><circle cx="51" cy="12" r="15" fill="#fa4a42"/><text x="51" y="17" font-size="14.500" fill="#fff" text-anchor="middle" letter-spacing="-.5">506</text>', 1],
    [tile('url(#gWa)', '<path d="M12 51l3-10a19.500 19.500 0 1 1 7.500 7.300z" fill="none" stroke="#fff" stroke-width="3.600" stroke-linejoin="round"/><path d="M25 21c2-1 3 0 4 4 .5 2-1.500 3-2 4 2 4 5 6 8.500 7.500 1-1 2-3 3.500-2.500 4 1.500 5 2.500 4.500 4-1 3-4.500 4.500-7 4C28 40 22 33 21.500 27c0-2.500 1.500-5 3.500-6z" fill="#fff"/>'), 0],
    [tile('#1a7df0', '<rect x="10" y="10" width="44" height="44" rx="8" fill="none" stroke="#7cc0fb" stroke-width="1"/><path d="M27 17l15 30M33 17L18 47M12 41h38" fill="none" stroke="#a8d6fd" stroke-width="4"/><path d="M27 17l15 30M33 17L18 47M12 41h38" fill="none" stroke="#1f84f2" stroke-width="2"/><path d="M46 11L28 60l-7-3L40 10z" fill="#3a3c42"/><path d="M35 3c9-3 17 0 21 5l7 3-1 7-8-3-5-3-10 0c1-5-1-7-4-9z" fill="#4b4e55"/>'), 0],
    ['<rect x="6" y="6" width="52" height="52" rx="12" fill="#d4dde2"/><rect x="8" y="8" width="48" height="48" rx="10" fill="#000"/><rect x="10.500" y="10.500" width="43" height="43" rx="8" fill="#252525"/><path d="M14 16l6 4-6 4M22 26h8" fill="none" stroke="#fff" stroke-width="1.900"/>', 1],
    ['<rect x="1.500" y="1.500" width="61" height="61" fill="#b40404" stroke="#b40404" stroke-width="3" stroke-dasharray="4 3"/><path d="M16 10h29l-2 9H24l-2 9h14l-1.500 8H20l-4 15H8z" fill="#fff"/><path d="M28 26h29l-1 7-17 15h13l-2 8H25l2-8 16-14H26z" fill="#fff"/>', 0],
    [tile('#d24726', '<circle cx="32" cy="32" r="20" fill="#f4f2f1"/><path d="M44 21l-7 7 6 6M21 43l7-7-6-6" transform="translate(-1 0)" fill="none" stroke="#d24726" stroke-width="5"/>'), 0],
    [tile('url(#gStore)', '<path d="M35 17L21 46M29 17l14 29M14 39h22M43 39h7" stroke="#fff" stroke-width="4.500" stroke-linecap="round"/>'), 0],
    ['<path d="M2 5h60v44H2z" fill="#3c3f42"/><path d="M5 8h54v34H5z" fill="#2c8fe0"/><path d="M22 17l6-1v8h-6zM30 16l8-1v9h-8zM22 26h6v8l-6-1zM30 26h8v9l-8-1z" fill="#a5e3fb"/><path d="M2 42h60v9H2z" fill="#d5d7d9"/><path d="M26 51h12l3 9H22z" fill="#b9bcbe"/><rect x="36" y="1" width="8" height="62" rx="4" fill="#ee1c24"/><rect x="49" y="1" width="8" height="62" rx="4" fill="#ee1c24"/>', 0],
    [tile('url(#gGray)', '<circle cx="32" cy="32" r="22" fill="#3b3b3b"/>' + ticks(40, 22.5, 20, '#a5a8aa', 1.2) + '<circle cx="32" cy="32" r="17.500" fill="#4a4a4a" stroke="#a3a3a3" stroke-width="3"/><path d="M32 32h17M32 32l-9-15M32 32l-9 15" stroke="#a3a3a3" stroke-width="3.500"/><circle cx="32" cy="32" r="4" fill="#5a5a5a" stroke="#a3a3a3" stroke-width="2"/>'), 0],
    [tile('#b30b00', '<path d="M18 46c-3-4 8-10 18-11 8-1 13 1 12 4s-9 0-15-7c-4-5-7-15-3-16s4 7 0 17c-3 7-9 17-12 13z" fill="none" stroke="#fff" stroke-width="2.600"/>'), 0],
    [tile('#fff', '<rect x="20" y="15" width="29" height="9" fill="#41a5ee"/><rect x="20" y="24" width="29" height="8" fill="#2b7cd3"/><rect x="20" y="32" width="29" height="8" fill="#185abd"/><rect x="20" y="40" width="29" height="9" fill="#103f91"/><rect x="11" y="22" width="19" height="20" rx="2" fill="#185abd"/><text x="20.500" y="37" font-size="13" font-weight="700" fill="#fff" text-anchor="middle">W</text>'), 0],
    ['<circle cx="33" cy="32" r="25" fill="#04202e" stroke="#c99a45" stroke-width="3.500"/><path d="M8 3h19l-3 6v39h8v-2h20l-5 15H10l4-7V9z" fill="url(#gGold)" stroke="#1c1a18" stroke-width="2"/>', 0],
    ['<path d="M46 0l17 8v48l-17 8z" fill="#b98cf0"/><path d="M46 0v18L10 50l-9-5V40z" fill="#8442c8"/><path d="M46 64V46L10 14l-9 5v5z" fill="#9b62dc"/><path d="M1 19l8 6v14l-8 6z" fill="#6d2fb0"/><rect x="46" y="34" width="6" height="28" rx="3" fill="#f9482f"/><rect x="55" y="34" width="6" height="28" rx="3" fill="#f9482f"/>', 0],
    ['<path d="M5 5h26v26H5zM33 5h26v26H33zM5 33h26v26H5zM33 33h26v26H33z" fill="#0a8bfa"/><rect x="47" y="34" width="6" height="28" rx="3" fill="#f9482f"/><rect x="56" y="34" width="6" height="28" rx="3" fill="#f9482f"/>', 1],
    [tile('url(#gGh)', '<svg x="10" y="10" width="44" height="44" fill="#f0eef4"><use href="#i-mark"/></svg>'), 1],
    [tile('#fff', '<rect x="9" y="9" width="46" height="46" rx="9" fill="#9dbdf0"/><path d="M9 34h46v8H9z" fill="#2b4674"/><path d="M9 42h46v4a9 9 0 0 1-9 9H18a9 9 0 0 1-9-9z" fill="#c9c3b8"/><path d="M36 43l-5 14c-1 5 29 5 28 0l-5-14z" fill="#cfd3d5" stroke="#8a8d8f"/><rect x="33" y="31" width="24" height="12" rx="3" fill="#1a1a1a"/><path d="M38 47l5 3-3 5-5-3zM47 46l5 1-1 5-5-1z" fill="#555"/>'), 1],
  ];
  const lines = (n, x, y, dy, w, c) => Array.from({length: n}, (_, i) => `<path d="M${x} ${y + i * dy}h${w * (.35 + (i * 37 % 60) / 100)}" stroke="${c}" stroke-width="1"/>`).join('');
  const talk = '<rect x="27" y="40" width="20" height="20" rx="5" fill="#fee500"/><ellipse cx="37" cy="49" rx="7.500" ry="6" fill="#3c1e1e"/><text x="37" y="51" font-size="5" font-weight="900" fill="#fee500" text-anchor="middle">TALK</text>';
  const windows = [
    ['w-[57px]', '<rect x="1" y="1" width="35" height="60" fill="#252525"/><rect x="1" y="1" width="6" height="60" fill="#3a3a3a"/>' + ['#d9a55c','#4a7fc0','#e8e0d0','#8a7a40','#9ad0f0','#e6e6e6','#2f9e62','#2f6f5e','#f5d90a'].map((c, i) => `<rect x="9" y="${7 + i * 6}" width="4" height="4" rx="1" fill="${c}"/><path d="M15 ${8 + i * 6}h9M15 ${10 + i * 6}h12" stroke="#8a8a8a" stroke-width=".7"/><circle cx="32" cy="${9 + i * 6}" r="${i % 4 ? 1 : 0}" fill="#e04438"/>`).join('') + talk],
    ['w-[66px]', '<rect x="0" y="15" width="61" height="38" fill="#3b3c40"/><rect x="11" y="21" width="50" height="31" fill="#14152e"/><path d="M2 23h7v5H2zM2 33h7v5H2zM2 43h7v5H2z" fill="#20254a"/>' + lines(12, 14, 24, 2.2, 34, '#34485f') + '<rect x="40" y="46" width="19" height="23" rx="5" fill="#fff"/><rect x="42" y="48" width="15" height="19" rx="3" fill="#9dbdf0"/><path d="M42 58h15v5H42z" fill="#2b4674"/><rect x="49" y="57" width="9" height="4" fill="#222"/><path d="M49 61h8l2 8H47z" fill="#dfe3e5"/>'],
    ['w-[70px]', '<rect x="0.500" y="12" width="63" height="39" rx="2" fill="#000" stroke="#c9cdd0"/><rect x="3.500" y="15" width="57" height="33" fill="#406899"/>' + lines(14, 5, 17, 2.2, 16, '#9fb6d0')],
    ['w-[75px]', '<rect x="0.500" y="12" width="63" height="39" rx="2" fill="#000" stroke="#c9cdd0"/><rect x="3.500" y="15" width="57" height="33" fill="#242424"/>' + lines(13, 5, 18, 2.2, 14, '#66705a')],
    ['w-[60px]', '<path d="M1 7l7 50c1 6 31 6 32 0l7-50z" fill="url(#gTrash)" fill-opacity=".95"/><path d="M1 7c6-5 40-5 46 0-6 5-40 5-46 0z" fill="#777b7d"/><path d="M5 7l4-4 3-1 5-2 4 3 5-2 2-2 6 4 5 1 4 4-8 2-8-1-8 2-8-2-5 1z" fill="#f0efed"/><path d="M13 9l4-4 3 3zM25 10l3-6 3 5zM34 6l3-2 3 3z" fill="#4a4a4a"/><path d="M17 6l4-1 1 3h-4z" fill="#3cb8e0"/><path d="M29 6l4-1 2 3-4 1z" fill="#d2603a"/><path d="M23 8l2-2 1 4-2 1z" fill="#9fce55"/>'],
  ];
  document.getElementById('dock').innerHTML =
    apps.map(a => `<div class="flex w-[69.070px] shrink-0 flex-col items-center pt-1.5"><svg class="size-16 overflow-visible" viewBox="0 0 64 64">${a[0]}</svg><i class="mt-0.5 size-2 rounded-full ${a[1] ? 'bg-[#d9d9d8]' : ''}"></i></div>`).join('')
    + '<div class="ml-[14px] mr-[31px] mt-2.5 h-[62px] w-0.5 shrink-0 bg-[#94928e]"></div>'
    + windows.map(w => `<div class="${w[0]} shrink-0 pt-2"><svg class="h-[70px] w-[66px] overflow-visible" viewBox="0 0 66 70">${w[1]}</svg></div>`).join('');
</script>
</body>
</html>
